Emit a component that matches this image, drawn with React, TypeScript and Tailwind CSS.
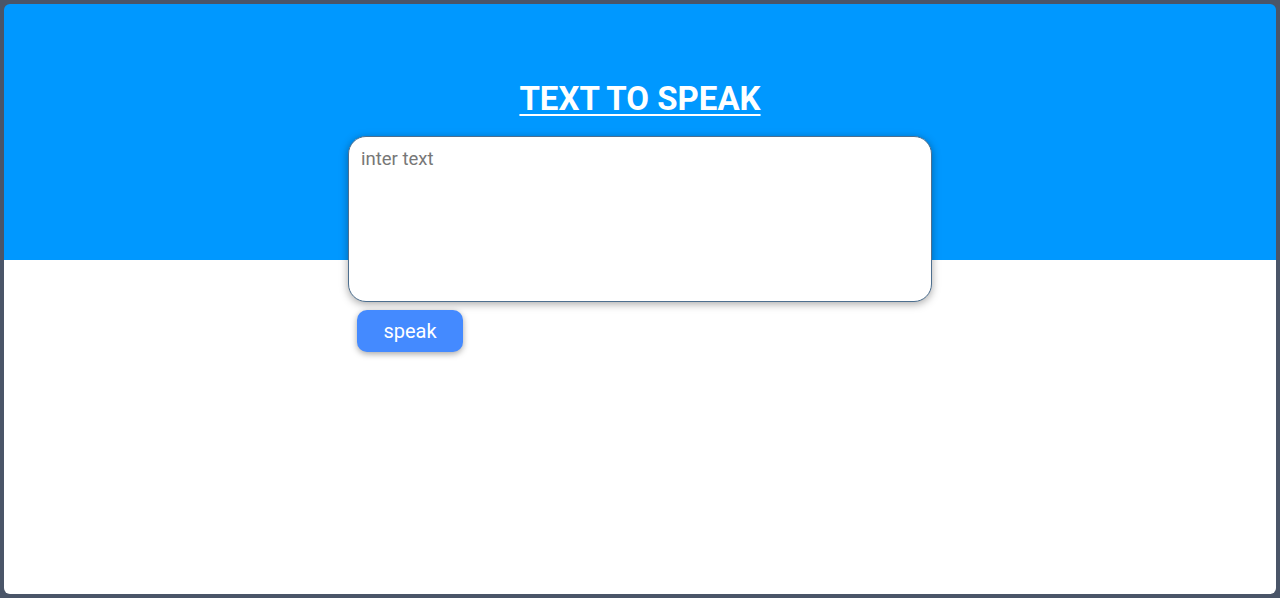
export default function App() {
  return (
    <div className="h-[598px] w-full bg-[#4a5568] p-1 font-['Roboto',sans-serif]">
      <div className="h-full overflow-hidden rounded-md bg-[linear-gradient(to_bottom,#0098ff_256px,#ffffff_256px)]">
        <div className="flex flex-col items-center pt-[76px]">
          <h1 className="text-[33px] leading-[38px] font-bold text-white underline decoration-2 underline-offset-[4px]">
            TEXT TO SPEAK
          </h1>
          <div className="mt-[18px] w-[584px]">
            <textarea
              autoFocus
              placeholder="inter text"
              className="block h-[166px] w-full resize-none rounded-[18px] border border-[#4d6f8f] bg-white px-3 py-3 text-[18.5px] leading-[21px] text-gray-800 caret-black shadow-[0_2px_8px_rgba(0,0,0,0.35)] outline-none placeholder:text-[#777777]"
            />
            <button className="mt-[8px] ml-[9px] h-[42px] w-[106px] rounded-[10px] bg-[#448aff] text-[20px] text-white shadow-[0_2px_6px_rgba(0,0,0,0.35)]">
              speak
            </button>
          </div>
        </div>
      </div>
    </div>
  );
}
